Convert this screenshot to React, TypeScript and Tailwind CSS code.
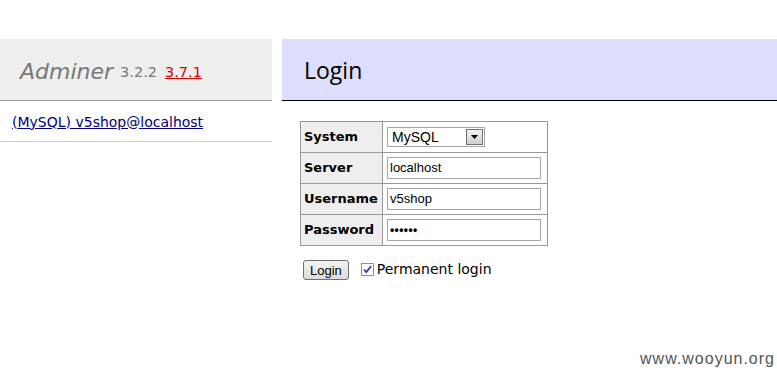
import React from "react";

const rows = [
  { label: "System", kind: "select", value: "MySQL" },
  { label: "Server", kind: "text", value: "localhost" },
  { label: "Username", kind: "text", value: "v5shop" },
  { label: "Password", kind: "password", value: "••••••" },
];

export default function App() {
  return (
    <div className="relative w-[777px] h-[370px] bg-white overflow-hidden font-['DejaVu_Sans',Verdana,sans-serif] text-black">
      <div className="flex pt-[39px]">
        {/* Menu */}
        <div className="w-[272px] shrink-0">
          <div className="h-[62px] bg-[#eeeeee] border-b border-[#999999] flex items-center pl-[20px] pt-[4px]">
            <span className="italic text-[22px] text-[#777777]">Adminer</span>
            <span className="ml-[7px] text-[14.5px] text-[#777777] mt-[3px]">3.2.2</span>
            <span className="ml-[8px] text-[14.5px] text-[#dd0000] underline mt-[3px]">3.7.1</span>
          </div>
          <div className="h-[41px] border-b border-[#cccccc] flex items-center pl-[12px] pt-[2px]">
            <a className="text-[14px] text-[#000080] underline">(MySQL) v5shop@localhost</a>
          </div>
        </div>

        {/* Content */}
        <div className="ml-[10px] flex-1">
          <div className="h-[62px] bg-[#ddddff] border-b border-black flex items-center pl-[22px] pt-[2px]">
            <h2 className="text-[23px] font-['Open_Sans','DejaVu_Sans',sans-serif]">Login</h2>
          </div>

          <div className="pl-[18px] pt-[20px]">
            <table className="border-collapse border border-[#999999] text-[13px]">
              <tbody>
                {rows.map((r) => (
                  <tr key={r.label} className="h-[31px]">
                    <th className="bg-[#eeeeee] border border-[#999999] text-left font-bold px-[3px] w-[82px]">
                      {r.label}
                    </th>
                    <td className="border border-[#999999] pl-[4px] pr-[6px]">
                      {r.kind === "select" ? (
                        <div className="w-[98px] h-[20px] border border-[#a5a5a5] flex items-center justify-between pl-[4px] pr-[1px] font-['Liberation_Sans',Arial,sans-serif] text-[14px]">
                          <span>{r.value}</span>
                          <span className="w-[17px] h-[16px] border border-[#707070] bg-gradient-to-b from-[#f2f2f2] to-[#cfcfcf] flex items-center justify-center">
                            <svg width="7" height="4" viewBox="0 0 7 4">
                              <path d="M0 0h7L3.5 4z" fill="#000" />
                            </svg>
                          </span>
                        </div>
                      ) : (
                        <div className="w-[154px] h-[22px] border border-[#a5a5a5] flex items-center pl-[2px] font-['Liberation_Sans',Arial,sans-serif] text-[13px]">
                          {r.kind === "password" ? (
                            <span className="text-[12px] font-bold tracking-[0.4px]">{r.value}</span>
                          ) : (
                            r.value
                          )}
                        </div>
                      )}
                    </td>
                  </tr>
                ))}
              </tbody>
            </table>

            <div className="flex items-center mt-[13px] ml-[3px]">
              <button className="h-[20px] px-[6px] border border-[#707070] rounded-[3px] bg-gradient-to-b from-[#f4f4f4] to-[#dcdcdc] text-[13px] font-['Liberation_Sans',Arial,sans-serif]">
                Login
              </button>
              <span className="ml-[12px] w-[13px] h-[13px] border border-[#8f8f8f] bg-white flex items-center justify-center">
                <svg width="9" height="9" viewBox="0 0 9 9">
                  <path d="M1 4.5l2.3 2.5L8 1.2" stroke="#2b3fa0" strokeWidth="1.8" fill="none" />
                </svg>
              </span>
              <span className="ml-[3px] text-[14px]">Permanent login</span>
            </div>
          </div>
        </div>
      </div>

      <div className="absolute right-[2px] bottom-[-1px] text-[16px] tracking-[1px] text-[#555555] font-['Liberation_Sans',Arial,sans-serif]">
        www.wooyun.org
      </div>
    </div>
  );
}
